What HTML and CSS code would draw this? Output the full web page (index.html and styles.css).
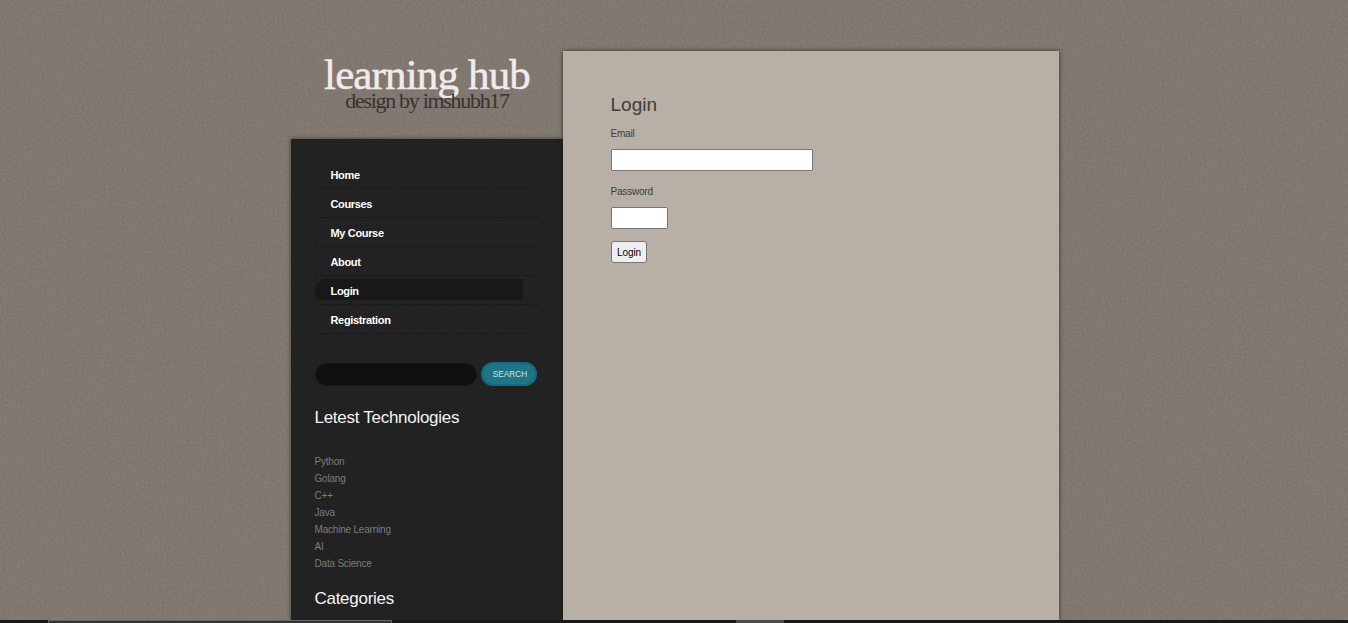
FILE: index.html
```html
<!DOCTYPE html>
<html lang="en">
<head>
<meta charset="utf-8">
<title>learning hub</title>
<link rel="stylesheet" href="styles.css">
</head>
<body>
<svg class="grain" width="1348" height="623" aria-hidden="true">
  <filter id="grain" x="0" y="0" width="100%" height="100%" color-interpolation-filters="sRGB">
    <feTurbulence type="fractalNoise" baseFrequency="0.45" numOctaves="3" seed="4"/>
    <feColorMatrix type="matrix" values="0.07 0 0 0 0.466  0.07 0 0 0 0.435  0.07 0 0 0 0.408  0 0 0 0 1"/>
  </filter>
  <rect width="100%" height="100%" filter="url(#grain)"/>
</svg>
<div class="page">
  <div class="left">
    <header class="brand">
      <h1 class="name">learning hub</h1>
      <p class="tagline">design by imshubh17</p>
    </header>
    <aside class="sidebar">
      <ul class="menu">
        <li><a class="link">Home</a></li>
        <li><a class="link">Courses</a></li>
        <li><a class="link">My Course</a></li>
        <li><a class="link">About</a></li>
        <li><a class="link active">Login</a></li>
        <li><a class="link">Registration</a></li>
      </ul>
      <form class="search">
        <input class="search-box" type="text" aria-label="Search">
        <button class="search-button" type="button">SEARCH</button>
      </form>
      <h2 class="heading">Letest Technologies</h2>
      <ul class="topics">
        <li>Python</li>
        <li>Golang</li>
        <li>C++</li>
        <li>Java</li>
        <li>Machine Learning</li>
        <li>AI</li>
        <li>Data Science</li>
      </ul>
      <h2 class="heading">Categories</h2>
    </aside>
  </div>
  <main class="content">
    <h2 class="title">Login</h2>
    <form class="login">
      <label class="label" for="email">Email</label>
      <input class="field email" id="email" type="text">
      <label class="label" for="password">Password</label>
      <input class="field password" id="password" type="password">
      <button class="submit" type="button">Login</button>
    </form>
  </main>
</div>
<div class="taskbar"><span class="task-search"></span><span class="task-active"></span></div>
</body>
</html>
```
FILE: styles.css
```css
* { box-sizing: border-box; }

body {
  margin: 0;
  height: 623px;
  overflow: hidden;
  background: #7f776f;
  font-family: "Liberation Sans", Arial, sans-serif;
  font-size: 10px;
}

h1, h2, p, ul { margin: 0; padding: 0; font-weight: normal; }
ul { list-style: none; }

.grain { position: absolute; inset: 0; z-index: -1; }

.page {
  display: flex;
  width: 768px;
  height: 620px;
  margin-left: 291px;
  overflow: visible;
}

.left { display: flex; flex-direction: column; width: 272px; }

.brand {
  height: 139px;
  flex: none;
  padding-top: 50px;
  text-align: center;
  font-family: "Liberation Serif", Georgia, serif;
}

.name {
  height: 39px;
  line-height: 50px;
  font-size: 43px;
  letter-spacing: -0.85px;
  color: #f1ebea;
  -webkit-text-stroke: 0.5px #f1ebea;
}

.tagline {
  line-height: 24px;
  font-size: 22px;
  letter-spacing: -1.3px;
  color: #38332e;
}

.sidebar {
  flex: 1;
  padding: 21px 24px 0;
  background: repeating-linear-gradient(135deg, #242424 0 1.41px, #202020 1.41px 2.83px);
  box-shadow: 0 0 4px rgba(30, 25, 10, 0.7);
}

.menu li {
  height: 29px;
  padding-top: 3px;
  border-bottom: 1px dashed #171717;
}

.link {
  display: block;
  width: 208px;
  height: 21px;
  padding-left: 15.5px;
  line-height: 24px;
  font-size: 11px;
  font-weight: bold;
  letter-spacing: -0.34px;
  color: #fff;
}

.active { background: #181818; border-radius: 11px 0 0 3px; }

.search { display: flex; align-items: center; gap: 4px; margin-top: 28px; }

.search-box {
  width: 162px;
  height: 23px;
  padding: 0 12px;
  border: 1px solid #191919;
  border-radius: 12px;
  background: #101010;
}

.search-button {
  width: 56px;
  height: 24px;
  padding: 0 0 0 2px;
  border: 2px solid #126b7e;
  border-radius: 12px;
  background: #1f7486;
  font: 8.3px "Liberation Sans", Arial, sans-serif;
  color: #d0e2e5;
}

.heading {
  margin: 22px 0 0 -0.5px;
  line-height: 20px;
  font-size: 17px;
  letter-spacing: -0.28px;
  color: #f4f4f4;
}

.topics { margin: 25px 0 16px -0.5px; }
.topics li { line-height: 17px; color: #7c7c7c; letter-spacing: -0.2px; }
.topics + .heading { margin-top: 17px; }

.content {
  width: 496px;
  height: 569px;
  margin-top: 51px;
  padding: 43px 48px 0;
  background: #b8afa6;
  box-shadow: 0 0 4px rgba(30, 25, 10, 0.8);
}

.title { margin-left: -0.5px; line-height: 22px; font-size: 19px; color: #403c3b; }

.login { display: flex; flex-direction: column; align-items: flex-start; margin-top: -1px; color: #403c3b; }

.label { margin: 10px 0 0 -0.5px; line-height: 17px; letter-spacing: -0.2px; }

.field {
  height: 22px;
  margin: 7px 0 2px;
  padding: 1px 4px;
  border: 1px solid #767676;
  border-radius: 2px;
  background: #fff;
}

.email { width: 202px; }
.password { width: 57px; }

.submit {
  width: 36px;
  height: 22px;
  margin-top: 10px;
  padding: 0;
  border: 1px solid #767676;
  border-radius: 3px;
  background: #efefef;
  font: 10px "Liberation Sans", Arial, sans-serif;
  letter-spacing: -0.1px;
  color: #000;
}

.taskbar { position: relative; display: flex; height: 3px; background: #1b1819; }

.task-search {
  width: 344px;
  height: 3px;
  margin-left: 48px;
  border: 1px solid #696767;
  border-bottom: 0;
  background: #343233;
}

.task-active { width: 48px; margin-left: 344px; background: #4c4a4a; }
```
